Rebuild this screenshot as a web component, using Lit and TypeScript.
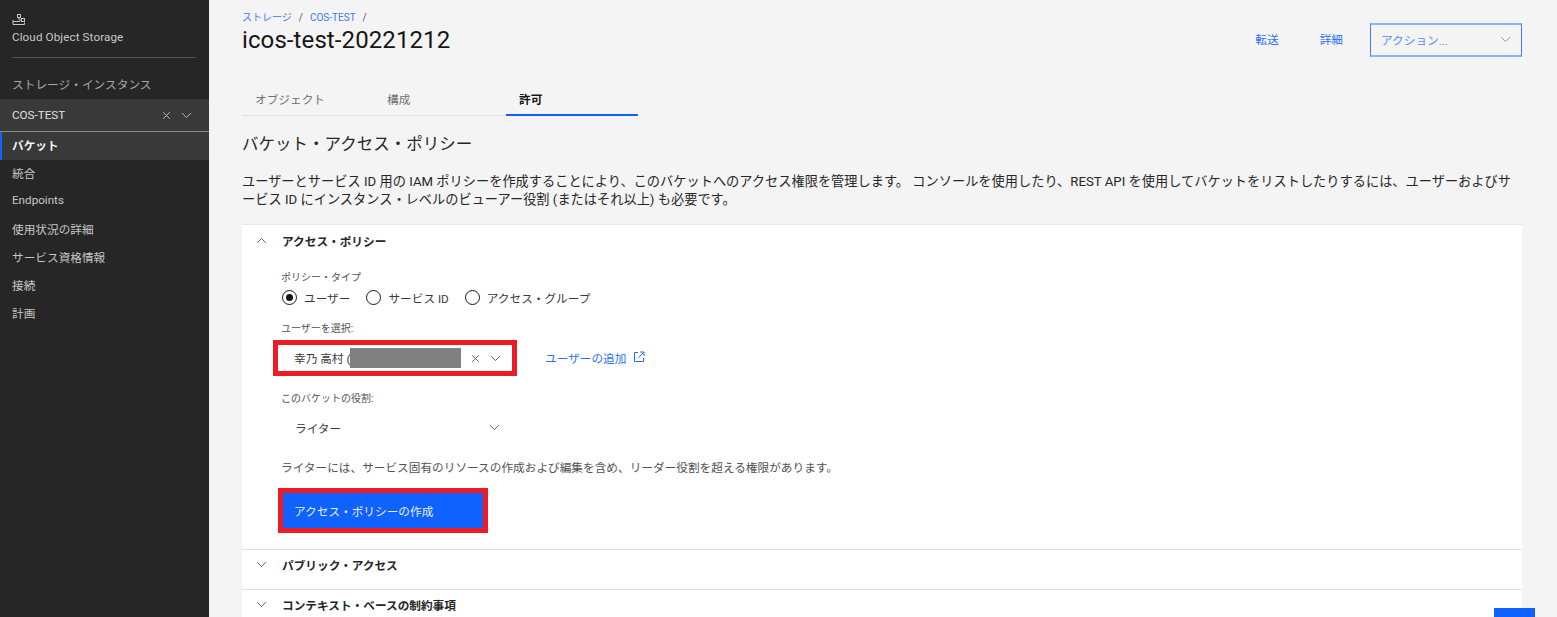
import { LitElement, html, css, svg } from "lit";
import { customElement } from "lit/decorators.js";

const chevDown = svg`<path d="M2.5 5 L8 10.5 L13.5 5" fill="none" stroke="currentColor" stroke-width="1.1"/>`;
const chevUp = svg`<path d="M2.5 11 L8 5.5 L13.5 11" fill="none" stroke="currentColor" stroke-width="1.1"/>`;
const cross = svg`<path d="M4 4 L12 12 M12 4 L4 12" fill="none" stroke="currentColor" stroke-width="1.1"/>`;
const icon = (p: unknown) => html`<svg class="ico" viewBox="0 0 16 16" width="16" height="16">${p}</svg>`;

@customElement("app-root")
export class AppRoot extends LitElement {
  static styles = css`
    :host { display: block; width: 1557px; height: 617px; overflow: hidden; position: relative; background: #f4f4f4; font-family: "Roboto", "Noto Sans CJK JP", sans-serif; color: #161616; }
    * { box-sizing: border-box; }
    .page { display: flex; height: 617px; }
    .side { width: 209px; flex: none; background: #262626; color: #c6c6c6; font-size: 11.67px; }
    .side-head { padding: 13px 12px 0; }
    .logo { display: block; width: 14px; height: 14px; }
    .svc { margin-top: 3px; line-height: 14px; font-size: 11.67px; letter-spacing: 0.1px; color: #c6c6c6; }
    .rule { height: 1px; background: #525252; margin: 13px 13px 0 12px; }
    .inst-title { margin: 19px 0 0 12px; line-height: 16px; font-size: 11.7px; color: #a8a8a8; }
    .inst { margin-top: 6px; height: 33px; background: #393939; border-bottom: 1px solid #8d8d8d; display: flex; align-items: center; padding: 0 16px 0 12px; color: #e0e0e0; font-size: 11.67px; }
    .inst span { flex: 1; }
    .inst .ico { width: 13px; height: 13px; margin-left: 7px; color: #c6c6c6; }
    .nav { height: 28px; display: flex; align-items: center; padding: 0 0 4px 12px; color: #c6c6c6; font-size: 11.67px; }
    .nav.on { background: #393939; color: #f4f4f4; font-weight: 700; box-shadow: inset 2px 0 0 #0f62fe; }
    .main { flex: 1; min-width: 0; padding: 11px 35px 0 33px; }
    .top { display: flex; justify-content: space-between; align-items: flex-start; }
    .crumbs { display: flex; font-size: 10px; line-height: 13px; color: #525252; height: 13px; }
    .crumbs a { color: #4178f0; }
    .crumbs i { font-style: normal; margin: 0 7px; }
    h1 { margin: 1px 0 0; font-size: 24px; font-weight: 400; line-height: 30px; letter-spacing: 0.1px; color: #161616; }
    .acts { display: flex; align-items: center; margin-top: 12px; font-size: 11.67px; color: #2a6ffa; }
    .acts a { margin-right: 41px; padding-bottom: 3px; }
    .acts a + a { margin-right: 27px; }
    .action { width: 152px; height: 34px; border: 1px solid #3b7dff; border-top: 2px solid #8fb2fb; border-bottom: 2px solid #8fb2fb; display: flex; align-items: center; justify-content: space-between; padding: 0 9px 1px 10px; color: #5a8cf5; }
    .action .ico { width: 13px; height: 13px; color: #6f93dc; }
    .tabs { display: flex; margin-top: 33px; height: 26px; gap: 0.5px; }
    .tab { width: 131.5px; padding: 0 0 0 13px; border-bottom: 1px solid #e0e0e0; font-size: 11.67px; line-height: 20px; color: #6f6f6f; }
    .tab.on { color: #161616; font-weight: 700; border-bottom: 2px solid #0f62fe; }
    h2 { margin: 17px 0 0; font-size: 16.5px; font-weight: 400; line-height: 24px; color: #262626; }
    .desc { margin: 16px 0 0; font-size: 13.2px; letter-spacing: 0.02px; line-height: 18px; color: #262626; white-space: nowrap; }
    .card { margin-top: 15px; background: #fff; border-top: 1px solid #e8e8e8; }
    .acc-head { height: 30px; display: flex; align-items: center; padding-left: 13px; font-size: 11.67px; font-weight: 700; color: #262626; }
    .acc-head .ico { width: 13px; height: 13px; margin-right: 14px; color: #525252; }
    .acc-body { padding: 0 0 0 39px; border-bottom: 1px solid #e0e0e0; height: 279px; }
    .lbl { font-size: 10px; line-height: 14px; color: #525252; }
    .lbl.l1 { margin-top: 16px; }
    .lbl.l2 { margin-top: 17px; }
    .lbl.l3 { margin-top: 16px; }
    .radios { display: flex; align-items: center; margin: 4px 0 0 1px; font-size: 11.67px; height: 16px; color: #393939; }
    .radio { width: 15px; height: 15px; border: 1px solid #161616; border-radius: 50%; display: flex; align-items: center; justify-content: center; margin-right: 7px; }
    .radio.on::after { content: ""; width: 7px; height: 7px; background: #161616; border-radius: 50%; }
    .rtxt { margin-right: 16px; }
    .field { display: flex; align-items: center; margin-top: 4px; }
    .redbox { width: 244px; height: 36px; margin-left: -8px; border: 5px solid #ed1c24; display: flex; align-items: center; padding: 0 10px 0 16px; font-size: 11.67px; background: #fff; color: #393939; }
    .redbox span:first-child { width: 56px; flex: none; white-space: nowrap; overflow: visible; padding-bottom: 2px; }
    .redbox .mask { width: 111px; height: 20px; background: #808080; margin-right: 8px; flex: none; }
    .redbox .ico, .sel .ico { width: 13px; height: 13px; color: #525252; }
    .redbox .ico + .ico { margin-left: 7px; }
    .add { margin-left: 28px; font-size: 11.67px; color: #2a6ffa; display: flex; align-items: center; padding-bottom: 2px; }
    .add svg { margin-left: 7px; }
    .sel { width: 222px; height: 36px; display: flex; align-items: center; justify-content: space-between; padding: 0 2px 0 14px; margin-top: 3px; font-size: 11.67px; color: #393939; }
    .note { font-size: 11.67px; line-height: 16px; color: #525252; margin-top: 15px; }
    .btnwrap { margin: 12px 0 0 -3px; width: 210px; height: 45px; border: 5px solid #ed1c24; background: #0f62fe; color: #e8efff; font-size: 11.67px; display: flex; align-items: center; padding-left: 11px; }
    .closed { height: 40px; padding-bottom: 10px; border-bottom: 1px solid #e0e0e0; }
    .float { position: absolute; left: 1494px; top: 608px; width: 41px; height: 20px; background: #0f62fe; }
  `;

  render() {
    return html`
      <div class="page">
        <aside class="side">
          <div class="side-head">
            <svg class="logo" viewBox="0 0 14 14" fill="none" stroke="#c6c6c6" stroke-width="1">
              <path d="M1 7 V11.5 H12.5 V9.5 M1 8.5 H8"/>
              <rect x="5.5" y="1.5" width="3" height="3"/>
              <rect x="9.5" y="5.5" width="3" height="3"/>
              <path d="M7 4.5 V7 H9.5"/>
            </svg>
            <div class="svc">Cloud Object Storage</div>
          </div>
          <div class="rule"></div>
          <div class="inst-title">ストレージ・インスタンス</div>
          <div class="inst"><span>COS-TEST</span>${icon(cross)}${icon(chevDown)}</div>
          <div class="nav on">バケット</div>
          <div class="nav">統合</div>
          <div class="nav">Endpoints</div>
          <div class="nav">使用状況の詳細</div>
          <div class="nav">サービス資格情報</div>
          <div class="nav">接続</div>
          <div class="nav">計画</div>
        </aside>
        <main class="main">
          <div class="top">
            <div>
              <div class="crumbs"><a>ストレージ</a><i>/</i><a>COS-TEST</a><i>/</i></div>
              <h1>icos-test-20221212</h1>
            </div>
            <div class="acts">
              <a>転送</a><a>詳細</a>
              <div class="action"><span>アクション...</span>${icon(chevDown)}</div>
            </div>
          </div>
          <div class="tabs">
            <div class="tab">オブジェクト</div>
            <div class="tab">構成</div>
            <div class="tab on">許可</div>
          </div>
          <h2>バケット・アクセス・ポリシー</h2>
          <p class="desc">ユーザーとサービス ID 用の IAM ポリシーを作成することにより、このバケットへのアクセス権限を管理します。 コンソールを使用したり、REST API を使用してバケットをリストしたりするには、ユーザーおよびサ<br />ービス ID にインスタンス・レベルのビューアー役割 (またはそれ以上) も必要です。</p>
          <section class="card">
            <div class="acc-head">${icon(chevUp)}アクセス・ポリシー</div>
            <div class="acc-body">
              <div class="lbl l1">ポリシー・タイプ</div>
              <div class="radios">
                <span class="radio on"></span><span class="rtxt">ユーザー</span>
                <span class="radio"></span><span class="rtxt">サービス ID</span>
                <span class="radio"></span><span>アクセス・グループ</span>
              </div>
              <div class="lbl l2">ユーザーを選択:</div>
              <div class="field">
                <div class="redbox"><span>幸乃 高村 (</span><span class="mask"></span>${icon(cross)}${icon(chevDown)}</div>
                <a class="add">ユーザーの追加
                  <svg viewBox="0 0 12 12" width="12" height="12" fill="none" stroke="currentColor" stroke-width="1"><path d="M5 1.5 H1.5 V10.5 H10.5 V7 M7 1 H11 V5 M11 1 L5.5 6.5"/></svg>
                </a>
              </div>
              <div class="lbl l3">このバケットの役割:</div>
              <div class="sel"><span>ライター</span>${icon(chevDown)}</div>
              <div class="note">ライターには、サービス固有のリソースの作成および編集を含め、リーダー役割を超える権限があります。</div>
              <div class="btnwrap">アクセス・ポリシーの作成</div>
            </div>
            <div class="acc-head closed">${icon(chevDown)}パブリック・アクセス</div>
            <div class="acc-head closed">${icon(chevDown)}コンテキスト・ベースの制約事項</div>
          </section>
        </main>
      </div>
      <div class="float"></div>
    `;
  }
}
